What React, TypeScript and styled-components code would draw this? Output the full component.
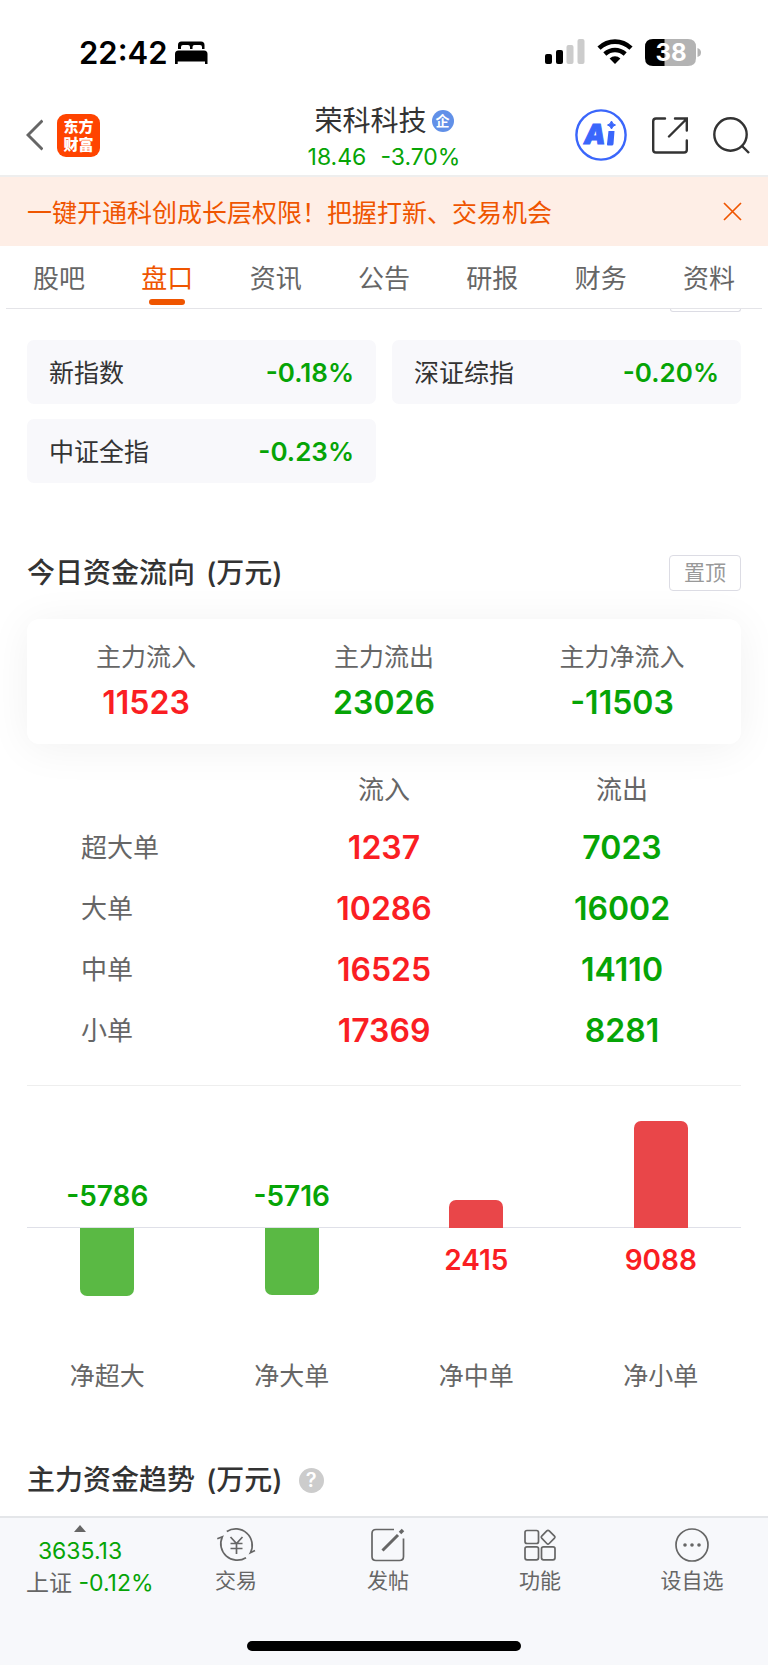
import React from 'react';
import styled, { createGlobalStyle } from 'styled-components';

type Tone = 'up' | 'down';

const toneColor = { up: '#fa1e23', down: '#06a406' };
const barColor = { up: '#e94649', down: '#5ab944' };

const GlobalStyle = createGlobalStyle`
  * { box-sizing: border-box; }
  body {
    margin: 0;
    background: #fff;
    color: #333;
    font-family: Inter, "Noto Sans CJK SC", sans-serif;
    font-size: 25px;
    line-height: 32px;
  }
  button { font: inherit; color: inherit; background: none; border: 0; padding: 0; cursor: pointer; }
  a { color: inherit; text-decoration: none; }
  h1, h2, p { margin: 0; font-weight: 400; }
  svg { display: block; flex: none; }
`;

const Page = styled.div`
  display: flex;
  flex-direction: column;
  min-height: 100vh;
`;

const StatusBar = styled.div`
  display: flex;
  justify-content: space-between;
  align-items: center;
  height: 103px;
  padding: 1px 67px 0 79px;
  color: #000;
`;

const StatusGroup = styled.div<{ $gap: number }>`
  display: flex;
  align-items: center;
  gap: ${(p) => p.$gap}px;
`;

const Clock = styled.time`
  padding-top: 1px;
  font-size: 31px;
  font-weight: 600;
`;

const Header = styled.header`
  display: grid;
  grid-template-columns: 1fr auto 1fr;
  align-items: center;
  height: 74px;
  padding: 0 18px;
  border-bottom: 2px solid #eee;
`;

const HeaderSide = styled.div<{ $end?: boolean }>`
  display: flex;
  align-items: center;
  gap: ${(p) => (p.$end ? 25 : 14)}px;
  justify-content: ${(p) => (p.$end ? 'flex-end' : 'flex-start')};
  padding: ${(p) => (p.$end ? '0 0 8px' : '0 0 8px 8px')};
`;

const Logo = styled.a`
  display: flex;
  flex-direction: column;
  align-items: center;
  justify-content: center;
  width: 43px;
  height: 43px;
  border-radius: 9px;
  background: #ff4400;
  color: #fff;
  font-family: "Noto Sans CJK SC", sans-serif;
  font-size: 15px;
  font-weight: 900;
  line-height: 18px;
`;

const Stock = styled.div`
  display: flex;
  flex-direction: column;
  align-items: center;
`;

const StockName = styled.h1`
  display: flex;
  align-items: center;
  gap: 5px;
  font-size: 28px;
  line-height: 36px;
`;

const Badge = styled.span`
  display: grid;
  place-content: center;
  width: 22px;
  height: 22px;
  border-radius: 50%;
  background: #6190e8;
  color: #fff;
  font-size: 14px;
  font-weight: 700;
  line-height: 22px;
`;

const Quote = styled.p`
  display: flex;
  gap: 14px;
  color: ${toneColor.down};
  font-size: 23px;
  line-height: 36px;
`;

const Banner = styled.div`
  display: flex;
  align-items: center;
  justify-content: space-between;
  height: 69px;
  padding: 0 26px 0 27px;
  background: #feeee6;
  color: #ef5500;
`;

const BannerLink = styled.a`
  padding-top: 2px;
`;

const Tabs = styled.nav`
  display: flex;
  justify-content: space-between;
  height: 63px;
  margin: 0 6px;
  padding: 0 27px;
  border-bottom: 1px solid #e4e4e8;
`;

const Tab = styled.a<{ $active?: boolean }>`
  display: flex;
  flex-direction: column;
  align-items: center;
  justify-content: space-between;
  padding: 17px 0 3px;
  color: ${(p) => (p.$active ? '#ef5500' : '#666')};
  font-size: 26px;

  &::after {
    content: '';
    width: 36px;
    height: 6px;
    border-radius: 3px;
    background: ${(p) => (p.$active ? '#ef5500' : 'transparent')};
  }
`;

const Content = styled.main`
  flex: 1;
  padding: 0 27px;
`;

const ScrolledEdge = styled.div`
  width: 71px;
  height: 3px;
  margin-left: auto;
  border: 1px solid #dcdce4;
  border-top: 0;
  border-radius: 0 0 4px 4px;
`;

const IndexGrid = styled.div`
  display: grid;
  grid-template-columns: 1fr 1fr;
  gap: 15px 16px;
  margin-top: 28px;
`;

const IndexCard = styled.a`
  display: flex;
  align-items: center;
  justify-content: space-between;
  height: 64px;
  padding: 2px 22px 0;
  border-radius: 7px;
  background: #f8f8fb;
`;

const IndexChange = styled.strong`
  color: ${toneColor.down};
  font-size: 26px;
  font-weight: 600;
`;

const SectionHead = styled.div<{ $top: number }>`
  display: flex;
  align-items: center;
  height: 38px;
  margin-top: ${(p) => p.$top}px;
`;

const SectionTitle = styled.h2`
  display: flex;
  gap: 11px;
  font-size: 28px;
  font-weight: 500;
`;

const PinButton = styled.button`
  width: 72px;
  height: 36px;
  margin-left: auto;
  border: 1px solid #dcdce4;
  border-radius: 4px;
  color: #999;
  font-size: 21px;
  line-height: 32px;
`;

const HelpButton = styled.button`
  width: 25px;
  height: 25px;
  margin-left: 16px;
  border-radius: 50%;
  background: #ccc;
  color: #fff;
  font-size: 20px;
  font-weight: 600;
  line-height: 25px;
`;

const Summary = styled.div`
  display: grid;
  grid-template-columns: repeat(3, 1fr);
  height: 125px;
  margin-top: 27px;
  padding-top: 20px;
  border-radius: 12px;
  background: #fff;
  box-shadow: 0 4px 44px rgba(0, 0, 0, 0.06);
  text-align: center;
`;

const SummaryLabel = styled.p`
  color: #666;
  line-height: 36px;
`;

const Amount = styled.span<{ $tone: Tone }>`
  color: ${(p) => toneColor[p.$tone]};
  font-size: 32px;
  font-weight: 600;
  line-height: 56px;
`;

const OrderTable = styled.table`
  width: 100%;
  margin-top: 18px;
  border-collapse: collapse;
  table-layout: fixed;
  text-align: center;

  th {
    padding: 0;
    color: #666;
    font-size: 26px;
    font-weight: 400;
  }
  td { padding: 0; }
  thead tr { height: 55px; }
  tbody tr { height: 61px; }
  tbody th { padding-left: 54px; text-align: left; }
`;

const Chart = styled.div`
  position: relative;
  display: grid;
  grid-template-columns: repeat(4, 1fr);
  gap: 0 24px;
  margin-top: 24px;
  padding-top: 34px;
  border-top: 1px solid #eee;
`;

const Axis = styled.div`
  position: absolute;
  top: 141px;
  left: 0;
  right: 0;
  height: 1px;
  background: #dfe0e8;
`;

const ChartColumn = styled.div`
  position: relative;
  display: grid;
  grid-template-rows: 108px 108px 56px;
  justify-items: center;
`;

const Bar = styled.div<{ $tone: Tone }>`
  grid-row: ${(p) => (p.$tone === 'up' ? 1 : 2)};
  align-self: ${(p) => (p.$tone === 'up' ? 'end' : 'start')};
  width: 54px;
  border-radius: ${(p) => (p.$tone === 'up' ? '7px 7px 0 0' : '0 0 7px 7px')};
  background: ${(p) => barColor[p.$tone]};
`;

const BarValue = styled.strong<{ $tone: Tone }>`
  grid-row: ${(p) => (p.$tone === 'up' ? 2 : 1)};
  align-self: ${(p) => (p.$tone === 'up' ? 'start' : 'end')};
  padding: 16px 0;
  color: ${(p) => toneColor[p.$tone]};
  font-size: 28px;
  font-weight: 600;
`;

const BarLabel = styled.span`
  grid-row: 3;
  align-self: end;
  color: #666;
`;

const BottomBar = styled.footer`
  height: 149px;
  border-top: 2px solid #e4e6e9;
  background: #f7f8fb;
`;

const BottomNav = styled.nav`
  display: grid;
  grid-template-columns: 160px repeat(4, 1fr);
  height: 123px;
`;

const MarketLink = styled.a`
  padding: 7px 0 0 26px;
  color: ${toneColor.down};
  font-size: 23px;
  white-space: nowrap;
`;

const MarketValue = styled.span`
  display: flex;
  flex-direction: column;
  align-items: center;
  gap: 3px;
  width: 108px;
`;

const MarketName = styled.span`
  color: #666;
`;

const NavButton = styled.button`
  display: flex;
  flex-direction: column;
  align-items: center;
  padding-top: 9px;
  gap: 2px;
  color: #666;
  font-size: 21px;
`;

const HomeIndicator = styled.div`
  width: 274px;
  height: 10px;
  margin: 0 auto;
  border-radius: 5px;
  background: #000;
`;

const BedIcon = () => (
  <svg width="33" height="23" viewBox="0 0 33 23" fill="#000" aria-hidden="true">
    <path d="M3 8V4Q3 .5 6.500.500H26Q29.500.500 29.500 4V8H27V6Q27 4 25 4H19.500Q17.500 4 17.500 6V8H15V6Q15 4 13 4H8Q6 4 6 6V8Z" />
    <path d="M0 23V13Q0 9.500 3.500 9.500H29Q32.500 9.500 32.500 13V23H30V20.500H2.700V23Z" />
  </svg>
);

const SignalIcon = () => (
  <svg width="40" height="26" viewBox="0 0 40 26" aria-hidden="true">
    <rect x="0" y="15" width="7" height="10" rx="2" />
    <rect x="11" y="11" width="7" height="14" rx="2" />
    <rect x="21.500" y="6" width="7" height="19" rx="2" fill="#ccc" />
    <rect x="32.500" y="0" width="7" height="25" rx="2" fill="#ccc" />
  </svg>
);

const WifiIcon = () => (
  <svg width="36" height="26" viewBox="0 0 36 26" fill="none" stroke="#000" strokeWidth="4.600" aria-hidden="true">
    <path d="M2 9.200Q9 2.600 18 2.600T34 9.200" />
    <path d="M7.800 15Q12.500 11 18 11T28.200 15" />
    <path d="M18 25L12.600 19.500Q15 17.300 18 17.300T23.400 19.500Z" fill="#000" stroke="none" />
  </svg>
);

const BatteryIcon = () => (
  <svg width="56" height="27" viewBox="0 0 56 27" role="img" aria-label="38%">
    <path d="M8 0H43Q51 0 51 8V19Q51 27 43 27H8Z" fill="#b3b3b3" />
    <path d="M19.500 0H8Q0 0 0 8V19Q0 27 8 27H19.500Z" fill="#000" />
    <path d="M52.500 9Q56 10 56 13.500T52.500 18Z" fill="#b3b3b3" />
    <text x="26" y="22" textAnchor="middle" fontSize="24" fontWeight="700" fill="#fff">38</text>
  </svg>
);

const BackIcon = () => (
  <svg width="17" height="32" viewBox="0 0 17 32" fill="none" stroke="#666" strokeWidth="3">
    <path d="M16.500 1.500L2 16L16.500 30.500" />
  </svg>
);

const AiIcon = () => (
  <svg width="52" height="52" viewBox="0 0 52 52" fill="#3a66fb">
    <circle cx="26" cy="26" r="24.600" fill="#fff" stroke="#3a66fb" strokeWidth="2.400" />
    <text x="9" y="34.500" fontSize="27" fontWeight="900" fontStyle="italic" stroke="#3a66fb" strokeWidth="1">A</text>
    <path d="M33.500 22H39.500L38.500 35Q38.300 36.500 36.800 36.500H33Q31.800 36.500 32 35Z" />
    <path d="M36.500 12Q37.300 15.200 40.500 16Q37.300 16.800 36.500 20Q35.700 16.800 32.500 16Q35.700 15.200 36.500 12Z" stroke="#3a66fb" />
  </svg>
);

const ShareIcon = () => (
  <svg width="36" height="37" viewBox="0 0 36 37" fill="none" stroke="#333" strokeWidth="2.400" strokeLinecap="round">
    <path d="M13 1.500H4Q1.200 1.500 1.200 4.300V33Q1.200 35.500 4 35.500H32Q34.800 35.500 34.800 33V23.500" />
    <path d="M23 1.500H34.800V13.500M34.500 2L17 19.500" />
  </svg>
);

const SearchIcon = () => (
  <svg width="37" height="37" viewBox="0 0 37 37" fill="none" stroke="#333" strokeWidth="2.400">
    <circle cx="17.500" cy="17.500" r="16.200" />
    <path d="M28.500 28.500L36 36" />
  </svg>
);

const CloseIcon = () => (
  <svg width="19" height="19" viewBox="0 0 19 19" fill="none" stroke="#ef5500" strokeWidth="1.700">
    <path d="M1 1L18 18M18 1L1 18" />
  </svg>
);

const CaretIcon = () => (
  <svg width="12" height="7" viewBox="0 0 12 7" fill="#666" aria-hidden="true">
    <path d="M0 7L6 0L12 7Z" />
  </svg>
);

const TradeIcon = () => (
  <svg width="40" height="36" viewBox="0 0 40 36" fill="none" stroke="#666" strokeWidth="1.700">
    <path d="M10.800 4.500A16.500 16.500 0 0 1 34.500 25.700L39 23.500" />
    <path d="M30 30.700A16.500 16.500 0 0 1 6.300 9.800L1.300 11.800" />
    <path d="M14.500 10L20.500 16.500L26.500 10M14.500 16.500H26.500M14.500 21.500H26.500M20.500 16.500V27" />
  </svg>
);

const PostIcon = () => (
  <svg width="34" height="36" viewBox="0 0 34 36" fill="none" stroke="#666" strokeWidth="1.700">
    <path d="M23 2.500H5Q1 2.500 1 6.500V29.500Q1 33.500 5 33.500H28.500Q32.500 33.500 32.500 29.500V11.500" />
    <path d="M11.500 23.500L27 8" strokeWidth="3" />
    <path d="M29 6L32 3" strokeWidth="3.600" />
  </svg>
);

const FeatureIcon = () => (
  <svg width="34" height="36" viewBox="0 0 34 36" fill="none" stroke="#666" strokeWidth="1.700">
    <rect x="2" y="3.500" width="13.500" height="13" rx="2" />
    <rect x="2" y="19.800" width="13.500" height="13" rx="2" />
    <rect x="18.500" y="19.800" width="13.500" height="13" rx="2" />
    <path d="M23.800 3.900Q25 2.700 26.200 3.900L31.500 9.200Q32.500 10.200 31.500 11.200L26.200 16.500Q25 17.700 23.800 16.500L18.700 11.200Q17.700 10.200 18.700 9.200Z" />
  </svg>
);

const MoreIcon = () => (
  <svg width="34" height="36" viewBox="0 0 34 36" fill="none" stroke="#666" strokeWidth="1.700">
    <circle cx="17" cy="18" r="16" />
    <g fill="#666" stroke="none">
      <circle cx="10" cy="18" r="1.800" />
      <circle cx="17" cy="18" r="1.800" />
      <circle cx="24" cy="18" r="1.800" />
    </g>
  </svg>
);

const tabs = ['股吧', '盘口', '资讯', '公告', '研报', '财务', '资料'];

const indices = [
  { name: '新指数', change: '-0.18%' },
  { name: '深证综指', change: '-0.20%' },
  { name: '中证全指', change: '-0.23%' },
];

const summary: { label: string; value: number; tone: Tone }[] = [
  { label: '主力流入', value: 11523, tone: 'up' },
  { label: '主力流出', value: 23026, tone: 'down' },
  { label: '主力净流入', value: -11503, tone: 'down' },
];

const orders = [
  { name: '超大单', inflow: 1237, outflow: 7023 },
  { name: '大单', inflow: 10286, outflow: 16002 },
  { name: '中单', inflow: 16525, outflow: 14110 },
  { name: '小单', inflow: 17369, outflow: 8281 },
];

const netFlows = [
  { label: '净超大', value: -5786 },
  { label: '净大单', value: -5716 },
  { label: '净中单', value: 2415 },
  { label: '净小单', value: 9088 },
];

const BAR_MAX_HEIGHT = 107;
const maxFlow = Math.max(...netFlows.map((f) => Math.abs(f.value)));

const actions = [
  { label: '交易', Icon: TradeIcon },
  { label: '发帖', Icon: PostIcon },
  { label: '功能', Icon: FeatureIcon },
  { label: '设自选', Icon: MoreIcon },
];

export default function App() {
  return (
    <Page>
      <GlobalStyle />
      <StatusBar>
        <StatusGroup $gap={8}>
          <Clock>22:42</Clock>
          <BedIcon />
        </StatusGroup>
        <StatusGroup $gap={12}>
          <SignalIcon />
          <WifiIcon />
          <BatteryIcon />
        </StatusGroup>
      </StatusBar>

      <Header>
        <HeaderSide>
          <button aria-label="返回"><BackIcon /></button>
          <Logo href="#home">
            <span>东方</span>
            <span>财富</span>
          </Logo>
        </HeaderSide>
        <Stock>
          <StockName>荣科科技<Badge>企</Badge></StockName>
          <Quote><span>18.46</span><span>-3.70%</span></Quote>
        </Stock>
        <HeaderSide $end>
          <button aria-label="Ai"><AiIcon /></button>
          <button aria-label="分享"><ShareIcon /></button>
          <button aria-label="搜索"><SearchIcon /></button>
        </HeaderSide>
      </Header>

      <Banner>
        <BannerLink href="#open">一键开通科创成长层权限！把握打新、交易机会</BannerLink>
        <button aria-label="关闭"><CloseIcon /></button>
      </Banner>

      <Tabs>
        {tabs.map((tab) => (
          <Tab key={tab} href="#tab" $active={tab === '盘口'}>{tab}</Tab>
        ))}
      </Tabs>

      <Content>
        <ScrolledEdge />
        <IndexGrid>
          {indices.map((item) => (
            <IndexCard key={item.name} href="#index">
              <span>{item.name}</span>
              <IndexChange>{item.change}</IndexChange>
            </IndexCard>
          ))}
        </IndexGrid>

        <SectionHead $top={71}>
          <SectionTitle>今日资金流向 <span>(万元)</span></SectionTitle>
          <PinButton>置顶</PinButton>
        </SectionHead>

        <Summary>
          {summary.map((item) => (
            <div key={item.label}>
              <SummaryLabel>{item.label}</SummaryLabel>
              <Amount $tone={item.tone}>{item.value}</Amount>
            </div>
          ))}
        </Summary>

        <OrderTable>
          <thead>
            <tr><td /><th scope="col">流入</th><th scope="col">流出</th></tr>
          </thead>
          <tbody>
            {orders.map((row) => (
              <tr key={row.name}>
                <th scope="row">{row.name}</th>
                <td><Amount $tone="up">{row.inflow}</Amount></td>
                <td><Amount $tone="down">{row.outflow}</Amount></td>
              </tr>
            ))}
          </tbody>
        </OrderTable>

        <Chart>
          <Axis />
          {netFlows.map((flow) => {
            const tone: Tone = flow.value > 0 ? 'up' : 'down';
            const height = Math.round((Math.abs(flow.value) / maxFlow) * BAR_MAX_HEIGHT);
            return (
              <ChartColumn key={flow.label}>
                <Bar $tone={tone} style={{ height }} />
                <BarValue $tone={tone}>{flow.value}</BarValue>
                <BarLabel>{flow.label}</BarLabel>
              </ChartColumn>
            );
          })}
        </Chart>

        <SectionHead $top={69}>
          <SectionTitle>主力资金趋势 <span>(万元)</span></SectionTitle>
          <HelpButton aria-label="说明">?</HelpButton>
        </SectionHead>
      </Content>

      <BottomBar>
        <BottomNav>
          <MarketLink href="#market">
            <MarketValue>
              <CaretIcon />
              3635.13
            </MarketValue>
            <span><MarketName>上证</MarketName> -0.12%</span>
          </MarketLink>
          {actions.map(({ label, Icon }) => (
            <NavButton key={label}>
              <Icon />
              {label}
            </NavButton>
          ))}
        </BottomNav>
        <HomeIndicator />
      </BottomBar>
    </Page>
  );
}
